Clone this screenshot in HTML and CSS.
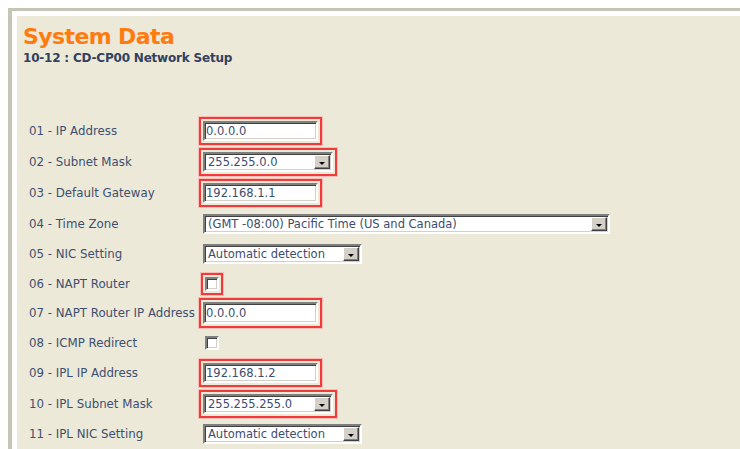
FILE: index.html
```html
<!DOCTYPE html>
<html lang="en">
<head>
<meta charset="utf-8">
<title>System Data</title>
<link rel="stylesheet" href="styles.css">
</head>
<body>
<div class="frame">
  <div class="panel">
    <h1 class="title">System Data</h1>
    <h2 class="subtitle">10-12 : CD-CP00 Network Setup</h2>

    <div class="form">
      <div class="label">01 - IP Address</div>
      <div class="cell"><span class="mark on"><span class="field w115">0.0.0.0</span></span></div>

      <div class="label">02 - Subnet Mask</div>
      <div class="cell"><span class="mark on"><span class="select w130"><span class="val">255.255.0.0</span><span class="btn"></span></span></span></div>

      <div class="label">03 - Default Gateway</div>
      <div class="cell"><span class="mark on"><span class="field w115">192.168.1.1</span></span></div>

      <div class="label">04 - Time Zone</div>
      <div class="cell"><span class="mark"><span class="select w407"><span class="val">(GMT -08:00) Pacific Time (US and Canada)</span><span class="btn"></span></span></span></div>

      <div class="label">05 - NIC Setting</div>
      <div class="cell"><span class="mark"><span class="select w159"><span class="val">Automatic detection</span><span class="btn"></span></span></span></div>

      <div class="label">06 - NAPT Router</div>
      <div class="cell"><span class="mark on box"><span class="check"></span></span></div>

      <div class="label">07 - NAPT Router IP Address</div>
      <div class="cell"><span class="mark on"><span class="field w115 tall">0.0.0.0</span></span></div>

      <div class="label">08 - ICMP Redirect</div>
      <div class="cell"><span class="mark box"><span class="check"></span></span></div>

      <div class="label">09 - IPL IP Address</div>
      <div class="cell"><span class="mark on"><span class="field w115">192.168.1.2</span></span></div>

      <div class="label">10 - IPL Subnet Mask</div>
      <div class="cell"><span class="mark on"><span class="select w130"><span class="val">255.255.255.0</span><span class="btn"></span></span></span></div>

      <div class="label">11 - IPL NIC Setting</div>
      <div class="cell"><span class="mark"><span class="select w159"><span class="val">Automatic detection</span><span class="btn"></span></span></span></div>
    </div>
  </div>
</div>
</body>
</html>
```

FILE: styles.css
```css
html, body {
  margin: 0;
  background: #ffffff;
  height: 100%;
  overflow: hidden;
}

.frame {
  margin: 8px 0 0 8px;
  border-top: 3px solid #c4c5b6;
  border-left: 4px solid #c4c5b6;
  padding: 5px 0 0 5px;
  height: calc(100% - 16px);
}

.panel {
  background: #ece9d8;
  height: 100%;
  padding: 0 0 0 6px;
  font-family: "DejaVu Sans", Verdana, sans-serif;
  color: #3c4d6e;
  overflow: hidden;
}

.title {
  margin: 0;
  padding-top: 8px;
  font-size: 22px;
  line-height: 26px;
  font-weight: bold;
  color: #ff7b0f;
  letter-spacing: -0.6px;
}

.subtitle {
  margin: 1px 0 0;
  font-size: 12px;
  line-height: 14px;
  font-weight: bold;
  color: #31415f;
  letter-spacing: -0.2px;
}

.form {
  margin: 50px 0 0 6px;
  display: grid;
  grid-template-columns: 170px 1fr;
  grid-template-rows: 31px 31px 31px 31px 30px 29px 30px 30px 30px 31px 30px;
  align-items: center;
  font-size: 11.5px;
}

.label {
  color: #3e4f70;
  white-space: nowrap;
  font-size: 11.8px;
}

.cell {
  display: flex;
  align-items: center;
}

/* highlight ring around changed fields */
.mark {
  display: inline-flex;
  border: 2px solid transparent;
  padding: 2px;
}

.mark.on {
  border-color: #f23a3a;
  box-shadow: 0 0 0 1px rgba(255, 150, 150, 0.5);
}

.mark.box {
  margin-left: 2px;
}

/* sunken XP-classic edges */
.field,
.select,
.check {
  box-sizing: border-box;
  background: #ffffff;
  border-style: solid;
  border-width: 2px;
  border-color: #7f7f7f #ffffff #ffffff #7f7f7f;
  box-shadow: inset 1px 1px 0 #404040, inset -1px -1px 0 #d4d0c8;
}

.field {
  display: block;
  height: 20px;
  line-height: 16px;
  padding: 0 0 0 1px;
  color: #3c4d70;
  white-space: nowrap;
}

.field.tall {
  height: 22px;
  line-height: 18px;
}

.select {
  display: flex;
  height: 20px;
  align-items: stretch;
  color: #3c4d70;
}

.select .val {
  flex: 1;
  line-height: 16px;
  padding-left: 3px;
  white-space: nowrap;
  overflow: hidden;
}

.select .btn {
  width: 16px;
  margin: 1px 1px 1px 0;
  box-sizing: border-box;
  background: #d4d0c8;
  border-style: solid;
  border-width: 1px;
  border-color: #ffffff #404040 #404040 #ffffff;
  box-shadow: inset -1px -1px 0 #808080;
  position: relative;
}

.select .btn::after {
  content: "";
  position: absolute;
  left: 4px;
  top: 6px;
  border-style: solid;
  border-width: 3px 3px 0 3px;
  border-color: #000000 transparent transparent transparent;
}

.check {
  display: block;
  width: 14px;
  height: 14px;
}

.w115 { width: 115px; }
.w130 { width: 130px; }
.w159 { width: 159px; }
.w407 { width: 407px; }
```
